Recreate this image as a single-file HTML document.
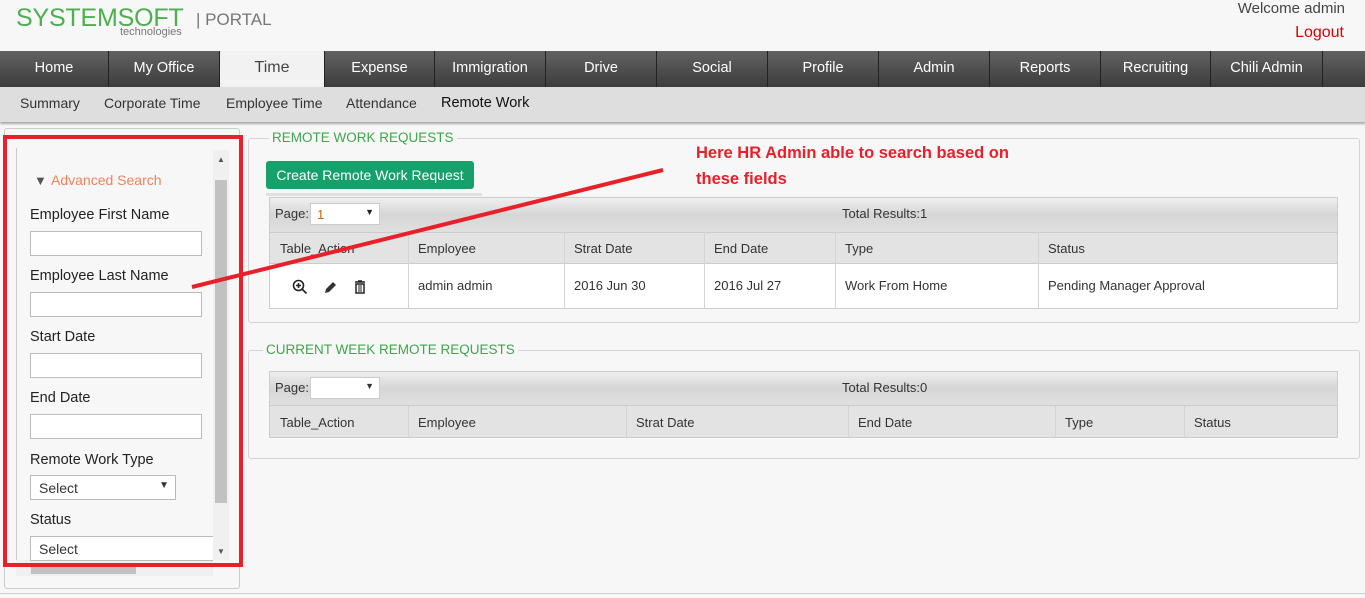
<!DOCTYPE html>
<html><head><meta charset="utf-8"><style>
*{box-sizing:border-box;margin:0;padding:0}
body{width:1365px;height:598px;overflow:hidden;background:#f7f7f7;font-family:"Liberation Sans",sans-serif;position:relative;color:#333}
.a{position:absolute}
.nav{left:0;top:51px;width:1365px;height:36px;background:linear-gradient(#626262,#3c3c3c)}
.nav div{position:absolute;top:0;height:36px;line-height:34px;color:#fff;font-size:14.5px;text-align:center;border-right:1px solid #222}
.nav .act{background:#f2f2f2;color:#444;font-size:16px;top:0;height:36px}
.sub{left:0;top:87px;width:1365px;height:35px;background:#dedede;box-shadow:0 2px 2px #aaa}
.sub span{position:absolute;top:8px;font-size:14px;color:#333}
.lbl{font-size:14.5px;color:#222}
.inp{background:#fff;border:1px solid #bbb;height:25px}
fieldset{position:absolute;border:1px solid #d4d4d4;border-radius:3px}
.lg{position:absolute;color:#3fa54e;font-size:13.5px;background:#f7f7f7;padding:0 3px}
.pg{background:linear-gradient(#efefef,#d6d6d6 50%,#e0e0e0);border:1px solid #ccc}
.th{background:#e3e3e3;border:1px solid #ccc}
.c{position:absolute;font-size:13px;color:#333}
.vl{position:absolute;width:1px;background:#d4d4d4}
</style></head><body>
<div class="a" style="left:16px;top:4px;font-size:25px;color:#4caf50;letter-spacing:-0.2px;transform:scaleX(1.0);font-weight:300">SYSTEMSOFT</div>
<div class="a" style="left:120px;top:26px;font-size:11px;color:#777">technologies</div>
<div class="a" style="left:196px;top:10px;font-size:17px;color:#777">| PORTAL</div>
<div class="a" style="right:20px;top:0px;font-size:15px;color:#444">Welcome admin</div>
<div class="a" style="right:21px;top:24px;font-size:16px;color:#d00">Logout</div>

<div class="a nav">
<div style="left:0;width:109px">Home</div>
<div style="left:109px;width:111px">My Office</div>
<div class="act" style="left:220px;width:105px">Time</div>
<div style="left:325px;width:110px">Expense</div>
<div style="left:435px;width:111px">Immigration</div>
<div style="left:546px;width:111px">Drive</div>
<div style="left:657px;width:111px">Social</div>
<div style="left:768px;width:111px">Profile</div>
<div style="left:879px;width:111px">Admin</div>
<div style="left:990px;width:111px">Reports</div>
<div style="left:1101px;width:110px">Recruiting</div>
<div style="left:1211px;width:112px">Chili Admin</div>
</div>
<div class="a sub">
<span style="left:20px">Summary</span><span style="left:104px">Corporate Time</span><span style="left:226px">Employee Time</span><span style="left:346px">Attendance</span><span style="left:441px;color:#111;font-size:14.5px">Remote Work</span>
</div>

<div class="a" style="left:4px;top:128px;width:236px;height:461px;border:1px solid #ccc;border-radius:3px;background:#f7f7f7"></div>
<div class="a" style="left:16px;top:148px;width:1px;height:415px;background:#ccc"></div>
<div class="a" style="left:213px;top:150px;width:16px;height:410px;background:#f0f0f0"></div>
<div class="a" style="left:215px;top:180px;width:12px;height:323px;background:#c1c1c1"></div>
<div class="a" style="left:217px;top:155px;font-size:8px;color:#555">▲</div>
<div class="a" style="left:217px;top:547px;font-size:8px;color:#555">▼</div>
<div class="a" style="left:16px;top:560px;width:197px;height:16px;background:#f0f0f0"></div>
<div class="a" style="left:31px;top:563px;width:105px;height:11px;background:#c1c1c1"></div>
<div class="a" style="left:34px;top:173px;font-size:13px;color:#555">▼</div>
<div class="a" style="left:51px;top:172px;font-size:14px;color:#f0825a">Advanced Search</div>
<div class="a lbl" style="left:30px;top:207px">Employee First Name</div>
<div class="a inp" style="left:30px;top:231px;width:172px"></div>
<div class="a lbl" style="left:30px;top:268px">Employee Last Name</div>
<div class="a inp" style="left:30px;top:292px;width:172px"></div>
<div class="a lbl" style="left:30px;top:329px">Start Date</div>
<div class="a inp" style="left:30px;top:353px;width:172px"></div>
<div class="a lbl" style="left:30px;top:390px">End Date</div>
<div class="a inp" style="left:30px;top:414px;width:172px"></div>
<div class="a lbl" style="left:30px;top:452px">Remote Work Type</div>
<div class="a inp" style="left:30px;top:475px;width:146px;font-size:14px;padding:4px 0 0 8px">Select<span style="position:absolute;right:6px;top:4px;font-size:10px">▼</span></div>
<div class="a lbl" style="left:30px;top:512px">Status</div>
<div class="a inp" style="left:30px;top:536px;width:183px;font-size:14px;padding:4px 0 0 8px;border-right:none">Select</div>
<div class="a" style="left:3px;top:135px;width:240px;height:432px;border:4px solid #e8202a"></div>

<fieldset style="left:248px;top:138px;width:1112px;height:185px"></fieldset>
<div class="lg" style="left:269px;top:130px">REMOTE WORK REQUESTS</div>
<div class="a" style="left:266px;top:161px;width:208px;height:28px;background:#16a06b;border-radius:3px;color:#fff;font-size:14px;line-height:28px;text-align:center">Create Remote Work Request</div>
<div class="a" style="left:266px;top:193px;width:216px;height:3px;background:#e0e0e0"></div>
<div class="a pg" style="left:269px;top:197px;width:1069px;height:36px"></div>
<div class="c" style="left:275px;top:206px">Page:</div>
<div class="a" style="left:310px;top:203px;width:70px;height:22px;background:#fff;border:1px solid #ccc;font-size:13px;padding:3px 6px;color:#c60">1<span style="position:absolute;right:5px;top:3px;font-size:9px;color:#222">▼</span></div>
<div class="c" style="left:842px;top:206px">Total Results:1</div>
<div class="a th" style="left:269px;top:232px;width:1069px;height:32px"></div>
<div class="a" style="left:269px;top:263px;width:1069px;height:46px;background:#fff;border:1px solid #ccc"></div>
<div class="vl" style="left:408px;top:232px;height:76px"></div><div class="vl" style="left:564px;top:232px;height:76px"></div><div class="vl" style="left:704px;top:232px;height:76px"></div><div class="vl" style="left:835px;top:232px;height:76px"></div><div class="vl" style="left:1038px;top:232px;height:76px"></div>
<div class="c" style="left:280px;top:241px">Table_Action</div><div class="c" style="left:418px;top:241px">Employee</div><div class="c" style="left:574px;top:241px">Strat Date</div><div class="c" style="left:714px;top:241px">End Date</div><div class="c" style="left:845px;top:241px">Type</div><div class="c" style="left:1048px;top:241px">Status</div>
<svg class="a" style="left:292px;top:279px" width="16" height="16"><circle cx="6.5" cy="6.5" r="5" fill="none" stroke="#222" stroke-width="1.6"/><path d="M10 10l4.5 4.5M4 6.5h5M6.5 4v5" stroke="#222" stroke-width="1.6"/></svg>
<svg class="a" style="left:323px;top:280px" width="15" height="15"><path d="M2 13l1-4 7-7 3 3-7 7z" fill="#333"/></svg>
<svg class="a" style="left:354px;top:280px" width="12" height="14"><path d="M1 2h10M4 1h4" stroke="#222" stroke-width="1.5"/><rect x="2" y="4" width="8" height="9" fill="none" stroke="#222" stroke-width="1.5"/><path d="M5 5v7M7 5v7" stroke="#222"/></svg>
<div class="c" style="left:418px;top:278px">admin admin</div><div class="c" style="left:574px;top:278px">2016 Jun 30</div><div class="c" style="left:714px;top:278px">2016 Jul 27</div><div class="c" style="left:845px;top:278px">Work From Home</div><div class="c" style="left:1048px;top:278px">Pending Manager Approval</div>

<fieldset style="left:248px;top:350px;width:1112px;height:109px"></fieldset>
<div class="lg" style="left:263px;top:342px">CURRENT WEEK REMOTE REQUESTS</div>
<div class="a pg" style="left:269px;top:371px;width:1069px;height:35px"></div>
<div class="c" style="left:275px;top:380px">Page:</div>
<div class="a" style="left:310px;top:377px;width:70px;height:22px;background:#fff;border:1px solid #ccc"><span style="position:absolute;right:5px;top:3px;font-size:9px">▼</span></div>
<div class="c" style="left:842px;top:380px">Total Results:0</div>
<div class="a th" style="left:269px;top:405px;width:1069px;height:33px"></div>
<div class="vl" style="left:408px;top:406px;height:31px"></div><div class="vl" style="left:626px;top:406px;height:31px"></div><div class="vl" style="left:848px;top:406px;height:31px"></div><div class="vl" style="left:1055px;top:406px;height:31px"></div><div class="vl" style="left:1184px;top:406px;height:31px"></div>
<div class="c" style="left:280px;top:415px">Table_Action</div><div class="c" style="left:418px;top:415px">Employee</div><div class="c" style="left:636px;top:415px">Strat Date</div><div class="c" style="left:858px;top:415px">End Date</div><div class="c" style="left:1065px;top:415px">Type</div><div class="c" style="left:1194px;top:415px">Status</div>

<div class="a" style="left:0;top:593px;width:1365px;height:1px;background:#ccc"></div>

<svg class="a" style="left:0;top:0" width="1365" height="598"><line x1="192" y1="287" x2="663" y2="170" stroke="#e8202a" stroke-width="4"/></svg>
<div class="a" style="left:696px;top:140px;font-size:16.5px;font-weight:bold;color:#e8202a;line-height:26px">Here HR Admin able to search based on<br>these fields</div>
</body></html>
